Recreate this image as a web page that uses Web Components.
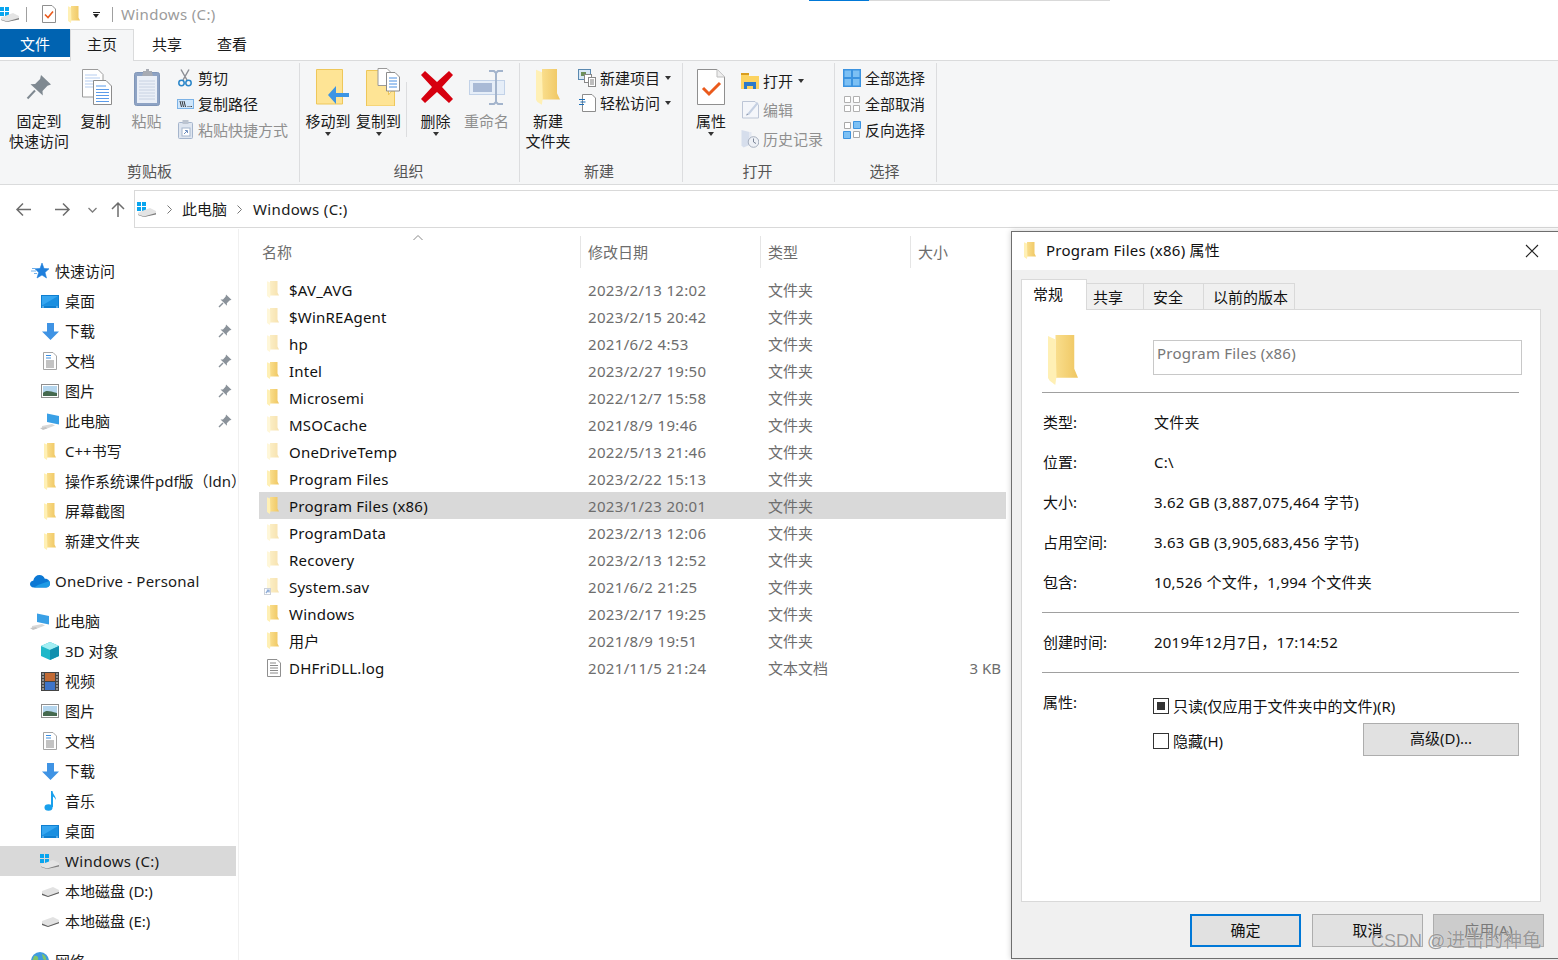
<!DOCTYPE html>
<html lang="zh">
<head>
<meta charset="utf-8">
<title>Windows (C:)</title>
<style>
  html, body { margin: 0; height: 960px; overflow: hidden; background: #fff; }
  body { font: 15px/20px "Noto Sans", "Noto Sans CJK SC", sans-serif; color: #1a1a1a; }
  explorer-window { width: 1558px; height: 960px; }
</style>
</head>
<body>
<explorer-window>
  <title-bar slot="top"></title-bar>
  <ribbon-tabs slot="top"></ribbon-tabs>
  <ribbon-bar slot="top">
    <ribbon-group label="剪贴板" width="300" pad="9">
      <ribbon-big icon="pin" w="60" lines="固定到|快速访问"></ribbon-big>
      <ribbon-big icon="copy" w="53" shift="2" lines="复制"></ribbon-big>
      <ribbon-big icon="clip" w="49" shift="1" lines="粘贴" off></ribbon-big>
      <ribbon-col gap="5">
        <ribbon-small icon="cut">剪切</ribbon-small>
        <ribbon-small icon="path">复制路径</ribbon-small>
        <ribbon-small icon="pasteshort" off>粘贴快捷方式</ribbon-small>
      </ribbon-col>
    </ribbon-group>
    <ribbon-group label="组织" width="220" pad="3" lshift="-1">
      <ribbon-big icon="moveto" w="50" shift="8" lines="移动到" arrow></ribbon-big>
      <ribbon-big icon="copyto" w="51" shift="8" lines="复制到" arrow></ribbon-big>
      <ribbon-sep></ribbon-sep>
      <ribbon-big icon="del" w="57" shift="2" lines="删除" arrow></ribbon-big>
      <ribbon-big icon="rename" w="45" shift="1" lines="重命名" off></ribbon-big>
    </ribbon-group>
    <ribbon-group label="新建" width="163" pad="3" lshift="-2">
      <ribbon-big icon="newfolder" w="50" lines="新建|文件夹"></ribbon-big>
      <ribbon-col gap="4">
        <ribbon-small icon="newitem" arrow>新建项目</ribbon-small>
        <ribbon-small icon="easy" arrow>轻松访问</ribbon-small>
      </ribbon-col>
    </ribbon-group>
    <ribbon-group label="打开" width="152" pad="3" lshift="-1">
      <ribbon-big icon="props" w="50" lines="属性" arrow></ribbon-big>
      <ribbon-col gap="8" top="4">
        <ribbon-small icon="open" arrow>打开</ribbon-small>
        <ribbon-small icon="edit" off>编辑</ribbon-small>
        <ribbon-small icon="history" off>历史记录</ribbon-small>
      </ribbon-col>
    </ribbon-group>
    <ribbon-group label="选择" width="102" pad="3" lshift="-1">
      <ribbon-col gap="5">
        <ribbon-small icon="selall">全部选择</ribbon-small>
        <ribbon-small icon="selnone">全部取消</ribbon-small>
        <ribbon-small icon="selinv">反向选择</ribbon-small>
      </ribbon-col>
    </ribbon-group>
  </ribbon-bar>
  <address-bar slot="top"></address-bar>

  <nav-pane slot="nav">
    <nav-item icon="star" level="0">快速访问</nav-item>
    <nav-item icon="desktop" pin>桌面</nav-item>
    <nav-item icon="down" pin>下载</nav-item>
    <nav-item icon="doc" pin>文档</nav-item>
    <nav-item icon="pic" pin>图片</nav-item>
    <nav-item icon="pc" pin>此电脑</nav-item>
    <nav-item icon="folder">C++书写</nav-item>
    <nav-item icon="folder">操作系统课件pdf版（ldn）</nav-item>
    <nav-item icon="folder">屏幕截图</nav-item>
    <nav-item icon="folder">新建文件夹</nav-item>
    <nav-item icon="onedrive" level="0" space wide>OneDrive - Personal</nav-item>
    <nav-item icon="pc" level="0" space>此电脑</nav-item>
    <nav-item icon="cube">3D 对象</nav-item>
    <nav-item icon="film">视频</nav-item>
    <nav-item icon="pic">图片</nav-item>
    <nav-item icon="doc">文档</nav-item>
    <nav-item icon="down">下载</nav-item>
    <nav-item icon="music">音乐</nav-item>
    <nav-item icon="desktop">桌面</nav-item>
    <nav-item icon="drive" selected wide>Windows (C:)</nav-item>
    <nav-item icon="hdd">本地磁盘 (D:)</nav-item>
    <nav-item icon="hdd">本地磁盘 (E:)</nav-item>
    <nav-item icon="globe" level="0" space>网络</nav-item>
  </nav-pane>

  <file-list slot="main">
    <file-row icon="folder" pale date="2023/2/13 12:02">$AV_AVG</file-row>
    <file-row icon="folder" pale date="2023/2/15 20:42">$WinREAgent</file-row>
    <file-row icon="folder" pale date="2021/6/2 4:53">hp</file-row>
    <file-row icon="folder" date="2023/2/27 19:50">Intel</file-row>
    <file-row icon="folder" date="2022/12/7 15:58">Microsemi</file-row>
    <file-row icon="folder" pale date="2021/8/9 19:46">MSOCache</file-row>
    <file-row icon="folder" pale date="2022/5/13 21:46">OneDriveTemp</file-row>
    <file-row icon="folder" date="2023/2/22 15:13">Program Files</file-row>
    <file-row icon="folder" selected date="2023/1/23 20:01">Program Files (x86)</file-row>
    <file-row icon="folder" pale date="2023/2/13 12:06">ProgramData</file-row>
    <file-row icon="folder" pale date="2023/2/13 12:52">Recovery</file-row>
    <file-row icon="linkfolder" pale date="2021/6/2 21:25">System.sav</file-row>
    <file-row icon="folder" date="2023/2/17 19:25">Windows</file-row>
    <file-row icon="folder" date="2021/8/9 19:51">用户</file-row>
    <file-row icon="log" date="2021/11/5 21:24" type="文本文档" size="3 KB">DHFriDLL.log</file-row>
  </file-list>

  <props-dialog slot="float"></props-dialog>
  <water-mark slot="float">CSDN @<span style="font-size:19px;margin-left:1px">进击的神龟</span></water-mark>
</explorer-window>

<script>
// folder gradient, every svg gets its own copy because ids stay inside one shadow root
const folderSvg = `
  <defs><linearGradient id="fg" x1="0" x2="1"><stop offset="0" stop-color="#fde69b"/><stop offset="1" stop-color="#efc661"/></linearGradient></defs>
  <path d="M0 0H10.500V11.500L12 14.500H3V0Z" fill="url(#fg)"/>
  <path d="M0 .3L3 1.500 3.400 14 2.900 17 .7 15.600 0 14.600Z" fill="#fff0b5"/>`;

const ICONS = {
  folder: [12, 17, folderSvg],
  linkfolder: [16, 17, `<g transform="translate(3)">${folderSvg}</g>
    <rect x=".5" y="10.500" width="6" height="6" fill="#fff" stroke="#9aa5b5"/><path d="M2 15l2-2.500M2.800 12.300H5V14.500" stroke="#1f5bb0" stroke-width="1.400" fill="none"/>`],
  newfolder: [24, 36, `<g transform="scale(2 2.110)">${folderSvg}</g>`],
  bigfolder: [30, 50, `<g transform="scale(2.500 2.940)">${folderSvg}</g>`],
  pin: [26, 26, `<path d="M15 1l10 9.500-3.500 1.200-5 5.300.3 4.500L4.500 10.300l4.600-.3 5-5z" fill="#7f8991"/><path d="M9 16.500L1.500 24.500" stroke="#7f8991" stroke-width="2"/>`],
  smallpin: [14, 14, `<path d="M8 .5l5.500 5.300-2 .6-2.700 2.900.2 2.400L2.500 5.500l2.500-.1 2.700-2.800z" fill="#8a929a"/><path d="M5 9L1 13" stroke="#8a929a" stroke-width="1.500"/>`],
  copy: [30, 36, `<path d="M.5.5H16l5 5V28H.5z" fill="#fff" stroke="#9c9c9c"/><path d="M3 6h12M3 9h15M3 12h15M3 15h15M3 18h15" stroke="#b5cdf0"/>
    <path d="M11.500 11.500H24l5.500 5.500v18.500h-18z" fill="#fff" stroke="#8c8c8c"/><path d="M14 17h10M14 20.500h13M14 23.500h13M14 26.500h13M14 29.500h13M14 32.500h13" stroke="#5b9bea"/>`],
  clip: [26, 37, `<rect x=".5" y="3.500" width="25" height="33" rx="2" fill="#8ea3c4" stroke="#8096b8"/><rect x="3" y="7" width="20" height="27" fill="#eaeff7"/>
    <path d="M5 12h16M5 15h16M5 18h16M5 21h16M5 24h16M5 27h16M5 30h16" stroke="#c8d2e2"/><path d="M9 4V2h3V0h3v2h3v2l1 3H8z" fill="#a7abb3"/>`],
  cut: [14, 18, `<path d="M3 .5L9 11M11 .5L5 11" stroke="#8c8f96" stroke-width="1.500"/><circle cx="3.500" cy="14" r="2.700" fill="none" stroke="#2b86c9" stroke-width="1.500"/><circle cx="10.500" cy="14" r="2.700" fill="none" stroke="#2b86c9" stroke-width="1.500"/>`],
  path: [17, 10, `<rect x=".5" y=".5" width="16" height="9" fill="#cfe6fb" stroke="#7bb2e6"/><path d="M3 2l1.500 6M5 2l1.500 6M7 2l1.500 6" stroke="#222" stroke-width=".9"/><path d="M10.500 7.500h1M12.500 7.500h1M14 7.500h1" stroke="#444"/>`],
  pasteshort: [15, 19, `<rect x=".5" y="2.500" width="14" height="16" rx="1" fill="#dfe6f0" stroke="#a5b5cc"/><rect x="4.500" y="0" width="6" height="4" fill="#bcc4d0"/><rect x="4" y="8" width="8" height="8" fill="#fff" stroke="#a5b5cc"/><path d="M6 14l3-3M7 10.500h2.500V13" stroke="#6f8fbf" fill="none"/>`],
  moveto: [33, 36, `<path d="M.5.5h26v34.500H.5z" fill="#fee495" stroke="#eec75a"/><path d="M33 24h-13V17L12 26l8 9v-7h13z" fill="#3d95e4"/>`],
  copyto: [34, 38, `<path d="M.5 2.500h22V27l3-4h3v15H.5z" fill="#fee495" stroke="#eec75a"/><path d="M13 .5h9l5 5v12H13z" fill="#fff" stroke="#9a9a9a" transform="translate(-1)"/><path d="M20.500 4.500H29l4.500 4.500v14H20.500z" fill="#fff" stroke="#8c8c8c"/><path d="M23 10h8M23 13h8M23 16h8M23 19h8" stroke="#4a90e2"/>`],
  del: [32, 32, `<path d="M4 0L16 11 28 0l4 4-11 12 11 12-4 4-12-11L4 32 0 28l11-12L0 4z" fill="#d6000f"/>`],
  rename: [36, 35, `<rect x=".5" y="10.500" width="35" height="14" fill="#e6eef8" stroke="#c2d2e8"/><rect x="4" y="13" width="19" height="9" fill="#a9bad6"/><path d="M22 1h5l2 2 2-2h5M29 3v29M22 34h5l2-2 2 2h5" stroke="#a3b4cc" stroke-width="2" fill="none" transform="translate(-2)"/>`],
  newitem: [18, 18, `<rect x=".5" y=".5" width="12" height="10" fill="#d8e8f5" stroke="#5a89b0"/><rect x="3" y="3" width="5" height="4" fill="#6c8f5a"/><rect x="6.500" y="5.500" width="7" height="8" fill="#fff" stroke="#888"/><rect x="10.500" y="8.500" width="7" height="9" fill="#fff" stroke="#888"/><path d="M12 11h4M12 13h4M12 15h4" stroke="#7d7d7d"/>`],
  easy: [17, 18, `<path d="M3.500.5H13l3.500 3.500v13.500h-13z" fill="#fff" stroke="#8c8c8c"/><path d="M0 5.500h6M1.500 8h5M0 10.500h5" stroke="#1d6fb8" stroke-width="1.200"/>`],
  props: [28, 36, `<path d="M.5.5H20l7.500 7.500v27.500H.5z" fill="#fff" stroke="#8f8f8f"/><path d="M20 .5V8h7.500" fill="#eee" stroke="#bdbdbd"/><path d="M6 19l6 6L23 14" fill="none" stroke="#ea5a1c" stroke-width="3"/>`],
  props14: [14, 18, `<path d="M.5.5H10l3.500 3.500v13.500H.5z" fill="#fff" stroke="#8f8f8f"/><path d="M3 9.500l3 3 5-6" fill="none" stroke="#ea5a1c" stroke-width="1.600"/>`],
  open: [18, 17, `<path d="M0 1h8v3h10v13H0z" fill="#fcd360"/><path d="M0 1h8v2H0z" fill="#d99d1e"/><path d="M3 10h12v7h-3v-3H6v3H3z" fill="#2b79c9"/>`],
  edit: [17, 19, `<path d="M.5 1.500H13L16.500 5v13H.5z" fill="#f4f6fa" stroke="#bdc6d6"/><path d="M5 14L15 2l1.500 1.500L7 15z" fill="#c5d0e2"/><path d="M4 15.500l1-2 1.500 1.200z" fill="#8b97ab"/>`],
  history: [18, 19, `<path d="M.5 1l8 2v13l-6 2.500-2-2z" fill="#d6deec"/><path d="M8.500 3h2v8h-2z" fill="#e4e9f2"/><circle cx="12.500" cy="13" r="5.300" fill="#eef1f6" stroke="#a5aebd"/><path d="M12.500 9.500V13l2.500 1.500" stroke="#7d8799" fill="none"/>`],
  selall: [18, 18, `<path d="M0 0h18v18H0z" fill="#3b93e0"/><path d="M1.500 1.500h6.500v6.500H1.500zM10 1.500h6.500v6.500H10zM1.500 10h6.500v6.500H1.500zM10 10h6.500v6.500H10z" fill="#7cc0f4"/>`],
  selnone: [18, 18, `<path d="M1.500 1.500h6v6h-6zM10.500 1.500h6v6h-6zM1.500 10.500h6v6h-6zM10.500 10.500h6v6h-6z" fill="#fff" stroke="#b0b0b0"/>`],
  selinv: [18, 18, `<path d="M1.500 1.500h6v6h-6zM10.500 10.500h6v6h-6z" fill="#fff" stroke="#a8a8a8"/><path d="M10.500 .5h7v7h-7zM.5 10.500h7v7h-7z" fill="#7cc0f4" stroke="#3b93e0"/>`],
  star: [18, 16, `<path d="M11 0l2 5.500 5 .3-4 3.600 1.500 5.600L11 12l-5 3 1.700-5.600-3.700-3.600 5-.3z" fill="#1f7fdc" stroke="#1f7fdc" stroke-width=".6"/><path d="M1 5.500h5M0 8h5M3 10.500h3" stroke="#6fb0ec"/>`],
  desktop: [18, 13, `<rect width="18" height="13" fill="#0f7fd0"/><path d="M1 1h16v9.500H1z" fill="#36a6f0"/><path d="M1 10.500L17 1v9.500z" fill="#1a8fe0"/><path d="M1 12h2M15 12h2" stroke="#9dd4fa"/>`],
  down: [17, 17, `<path d="M5 0h7v8.500h5L8.500 17 0 8.500h5z" fill="#3f93e4"/>`],
  doc: [14, 18, `<path d="M.5.5H10l3.500 3.500v13.500H.5z" fill="#fff" stroke="#a5a5a5"/><path d="M3 3.500h5M3 6h5" stroke="#3a8ee0"/><path d="M3 9h8M3 11h8M3 13h8M3 15h8" stroke="#888"/>`],
  pic: [18, 14, `<rect x=".5" y=".5" width="17" height="13" fill="#fff" stroke="#8f8f8f"/><rect x="2" y="2" width="14" height="10" fill="#b5d6ee"/><path d="M2 9c3-3 6-2 14 0v3H2z" fill="#45694f"/>`],
  pc: [20, 17, `<path d="M7 .5l12 2.500v8.500L7 9z" fill="#39a0e6"/><path d="M2 13l10-2 3 1.500-9 3.500H2z" fill="#d8d8d8"/><path d="M0 15l6-1 1 1.500-4 1.500z" fill="#c4c4c4"/>`],
  drive: [20, 15, `<path d="M0 0h4v4H0zM5 0h4v4H5zM0 5h4v4H0zM5 5h4v4H5z" fill="#08a5ef"/><path d="M1 10.500l12-4.500 6 3v2.500L7 15l-6-2z" fill="#e4e4e4"/><path d="M1 12.500L7 14.500l12-3.500v1.500L7 15l-6-2z" fill="#7d7d7d"/>`],
  hdd: [19, 11, `<path d="M1 5l11-4 6 3v3L7 11 1 9z" fill="#e2e2e2"/><path d="M1 7.500L7 10 18 6v1.300L7 11 1 9z" fill="#5f5f5f"/>`],
  onedrive: [20, 14, `<path d="M4 13.500C1 13.500 0 11.500 0 10c0-2 1.500-3.300 3.200-3.300C4 3 6.500 1 9.500 1c2.500 0 4.500 1.500 5.300 3.700 3-.3 5.200 2 5.200 4.800 0 2.500-2 4-4 4z" fill="#0b78d4"/><path d="M4 13.500h12c2 0 4-1.500 4-4 0-1-.3-1.800-.7-2.500L8 11z" fill="#1d9ae5"/>`],
  cube: [18, 18, `<path d="M9 0l9 4v10l-9 4-9-4V4z" fill="#1fb8c9"/><path d="M0 4l9 4 9-4-9-4z" fill="#a2eef3"/><path d="M9 8l9-4v10l-9 4z" fill="#118fae"/>`],
  film: [18, 19, `<rect width="18" height="19" fill="#444"/><rect x="4" y="1" width="10" height="8" fill="#c26a34"/><rect x="4" y="10" width="10" height="8" fill="#3e74c8"/><path d="M1 2h2M1 5h2M1 8h2M1 11h2M1 14h2M1 17h2M15 2h2M15 5h2M15 8h2M15 11h2M15 14h2M15 17h2" stroke="#ddd"/>`],
  music: [12, 20, `<ellipse cx="4.500" cy="16.500" rx="4" ry="3.300" fill="#19a0ec"/><path d="M7 16V0h1.500c.5 4 3.500 5 3.500 9-1-2-2-3-3-3.500V16z" fill="#19a0ec"/>`],
  log: [14, 18, `<path d="M.5.500H10l3.500 3.500v13.500H.5z" fill="#fff" stroke="#8f8f8f"/><path d="M3 4h6M3 6.500h8M3 9h8M3 11.500h8M3 14h8" stroke="#8a8a8a"/>`],
  globe: [18, 18, `<circle cx="9" cy="9" r="9" fill="#3f9be0"/><path d="M3 4c3-1 5 1 4 4s-3 2-4 5l-2-3zM11 2c3 1 5 4 4 7l-3-2z" fill="#7fc46b"/>`],
  close: [14, 14, `<path d="M1 1l12 12M13 1L1 13" stroke="#222" stroke-width="1.100"/>`]
};

class XIcon extends HTMLElement {
  connectedCallback() {
    const [w, h, body] = ICONS[this.getAttribute('name')];
    const root = this.shadowRoot || this.attachShadow({mode: 'open'});
    root.innerHTML = `<style>:host{display:inline-flex;flex:none} svg{display:block}</style>
      <svg width="${w}" height="${h}" viewBox="0 0 ${w} ${h}">${body}</svg>`;
  }
}

class ExplorerWindow extends HTMLElement {
  constructor() {
    super();
    this.attachShadow({mode: 'open'}).innerHTML = `
      <style>
        :host { display: flex; flex-direction: column; position: relative; overflow: hidden; }
        .main { display: flex; flex: 1; min-height: 0; }
      </style>
      <slot name="top"></slot>
      <div class="main"><slot name="nav"></slot><slot name="main"></slot></div>
      <slot name="float"></slot>`;
  }
}

class TitleBar extends HTMLElement {
  constructor() {
    super();
    this.attachShadow({mode: 'open'}).innerHTML = `
      <style>
        :host { display: flex; align-items: center; height: 29px; padding-bottom: 1px; box-sizing: border-box; position: relative; color: #9b9b9b; }
        i { width: 1px; height: 15px; background: #a0a0a0; }
        b { width: 0; height: 0; border: 3.500px solid transparent; border-top: 4px solid #222; border-bottom: 0; position: relative; top: 2px; }
        b::before { content: ""; position: absolute; left: -3.500px; top: -6px; width: 7px; height: 1px; background: #222; }
        span { letter-spacing: .35px; }
        .top { position: absolute; top: 0; left: 809px; width: 301px; height: 1px; background: #d9d9d9; }
        .top::before { content: ""; position: absolute; left: 0; top: 0; width: 60px; height: 1px; background: #0078d7; }
      </style>
      <div class="top"></div>
      <x-icon name="drive" style="margin-right:6px"></x-icon>
      <i style="margin-right:15px"></i>
      <x-icon name="props14"></x-icon>
      <x-icon name="folder" style="margin:0 13px 0 12px"></x-icon>
      <b style="margin-right:13px"></b>
      <i style="margin-right:8px"></i>
      <span>Windows (C:)</span>`;
  }
}

class RibbonTabs extends HTMLElement {
  constructor() {
    super();
    this.attachShadow({mode: 'open'}).innerHTML = `
      <style>
        :host { display: flex; height: 32px; box-sizing: border-box; border-bottom: 1px solid #dadbdc; }
        div { width: 65px; text-align: center; padding-top: 5px; height: 32px; box-sizing: border-box; }
        .file { width: 70px; height: 28px; background: #0063b1; color: #fff; padding-top: 5px; }
        .on { width: 64px; background: #f5f6f7; border: 1px solid #dadbdc; border-bottom: 0; padding-top: 4px; }
      </style>
      <div class="file">文件</div><div class="on">主页</div><div style="width:66px">共享</div><div style="width:64px">查看</div>`;
  }
}

class RibbonBar extends HTMLElement {
  constructor() {
    super();
    this.attachShadow({mode: 'open'}).innerHTML = `
      <style>
        :host { display: flex; height: 123px; background: #f5f6f7; border-bottom: 1px solid #dadbdc; box-sizing: content-box; }
      </style>
      <slot></slot>`;
  }
}

class RibbonGroup extends HTMLElement {
  constructor() {
    super();
    this.attachShadow({mode: 'open'}).innerHTML = `
      <style>
        :host { display: flex; flex-direction: column; box-sizing: border-box; height: 119px; margin-top: 2px; border-right: 1px solid #dcdddf; }
        .body { display: flex; align-items: flex-start; height: 98px; padding-top: 3px; box-sizing: border-box; }
        .label { text-align: center; color: #555; height: 20px; }
      </style>
      <div class="body"><slot></slot></div><div class="label"></div>`;
  }
  connectedCallback() {
    this.style.width = this.getAttribute('width') + 'px';
    this.shadowRoot.querySelector('.body').style.paddingLeft = this.getAttribute('pad') + 'px';
    const label = this.shadowRoot.querySelector('.label');
    label.textContent = this.getAttribute('label');
    // the group captions do not sit quite in the middle of their group
    const shift = +this.getAttribute('lshift') || 0;
    if (shift) label.style.paddingRight = (-shift * 2) + 'px';
  }
}

class RibbonBig extends HTMLElement {
  constructor() {
    super();
    this.attachShadow({mode: 'open'}).innerHTML = `
      <style>
        :host { display: flex; flex-direction: column; align-items: center; flex: none; white-space: nowrap; }
        :host([off]) { color: #8f8f8f; }
        .pic { height: 38px; margin-top: 2px; margin-bottom: 5px; display: flex; align-items: center; justify-content: center; }
        b { width: 0; height: 0; margin-top: 1px; border: 3.500px solid transparent; border-top: 4px solid #333; border-bottom: 0; }
      </style>
      <div class="pic"></div><div class="txt"></div>`;
  }
  connectedCallback() {
    const root = this.shadowRoot;
    const pic = root.querySelector('.pic');
    this.style.width = this.getAttribute('w') + 'px';
    pic.innerHTML = `<x-icon name="${this.getAttribute('icon')}"></x-icon>`;
    if (this.hasAttribute('shift')) pic.style.paddingLeft = this.getAttribute('shift') + 'px';
    root.querySelector('.txt').innerHTML = this.getAttribute('lines').split('|').map(s => `<div style="text-align:center">${s}</div>`).join('');
    if (this.hasAttribute('arrow')) root.appendChild(document.createElement('b'));
  }
}

class RibbonCol extends HTMLElement {
  constructor() {
    super();
    this.attachShadow({mode: 'open'}).innerHTML = `
      <style>:host { display: flex; flex-direction: column; padding: 1px 0 0 5px; }</style><slot></slot>`;
  }
  connectedCallback() {
    this.style.gap = this.getAttribute('gap') + 'px';
    if (this.hasAttribute('top')) this.style.paddingTop = this.getAttribute('top') + 'px';
  }
}

class RibbonSmall extends HTMLElement {
  constructor() {
    super();
    this.attachShadow({mode: 'open'}).innerHTML = `
      <style>
        :host { display: flex; align-items: center; height: 21px; white-space: nowrap; }
        :host([off]) { color: #8f8f8f; }
        .pic { width: 18px; display: flex; justify-content: center; margin-right: 4px; }
        b { width: 0; height: 0; margin-left: 5px; border: 3.500px solid transparent; border-top: 4px solid #333; border-bottom: 0; }
      </style>
      <div class="pic"></div><slot></slot>`;
  }
  connectedCallback() {
    this.shadowRoot.querySelector('.pic').innerHTML = `<x-icon name="${this.getAttribute('icon')}"></x-icon>`;
    if (this.hasAttribute('arrow')) this.shadowRoot.appendChild(document.createElement('b'));
  }
}

class RibbonSep extends HTMLElement {
  constructor() {
    super();
    this.attachShadow({mode: 'open'}).innerHTML = `
      <style>:host { display: block; flex: none; width: 1px; height: 55px; margin: 16px 0 0 2px; background: #dcdddf; }</style>`;
  }
}

class AddressBar extends HTMLElement {
  constructor() {
    super();
    this.attachShadow({mode: 'open'}).innerHTML = `
      <style>
        :host { display: flex; align-items: flex-start; height: 44px; padding-top: 5px; box-sizing: border-box; }
        .btns { width: 134px; flex: none; height: 39px; }
        .btns svg { display: block; }
        .box { flex: 1; display: flex; align-items: center; height: 38px; box-sizing: border-box; border: 1px solid #d9d9d9; border-right: 0; padding-left: 2px; }
        .chev { margin: 0 10px; }
        .wide { letter-spacing: .35px; }
      </style>
      <div class="btns">
        <svg width="134" height="39" viewBox="0 0 134 39" fill="none">
          <path d="M31 19.500H17M23 13.500l-6 6 6 6" stroke="#6d6d6d" stroke-width="1.500"/>
          <path d="M55 19.500h14M63 13.500l6 6-6 6" stroke="#6d6d6d" stroke-width="1.500"/>
          <path d="M88.500 18l4 4 4-4" stroke="#7d7d7d" stroke-width="1.300"/>
          <path d="M118 27V13M112 19l6-6 6 6" stroke="#6d6d6d" stroke-width="1.500"/>
        </svg>
      </div>
      <div class="box">
        <x-icon name="drive"></x-icon>
        <svg class="chev" width="5" height="9" viewBox="0 0 5 9" fill="none"><path d="M.5.5l4 4-4 4" stroke="#777"/></svg>
        <span>此电脑</span>
        <svg class="chev" style="margin-right:11px" width="5" height="9" viewBox="0 0 5 9" fill="none"><path d="M.5.5l4 4-4 4" stroke="#777"/></svg>
        <span class="wide">Windows (C:)</span>
      </div>`;
  }
}

class NavPane extends HTMLElement {
  constructor() {
    super();
    this.attachShadow({mode: 'open'}).innerHTML = `
      <style>
        :host { display: block; width: 239px; flex: none; box-sizing: border-box; padding-top: 27px; border-right: 1px solid #f0f0f0; overflow: hidden; }
      </style>
      <slot></slot>`;
  }
}

class NavItem extends HTMLElement {
  constructor() {
    super();
    this.attachShadow({mode: 'open'}).innerHTML = `
      <style>
        :host { display: flex; align-items: center; height: 30px; width: 236px; box-sizing: border-box; padding-left: 40px; white-space: nowrap; overflow: hidden; }
        :host([level="0"]) { padding-left: 30px; }
        :host([space]) { margin-top: 10px; }
        :host([selected]) { background: #d9d9d9; }
        :host([wide]) { letter-spacing: .2px; }
        :host([selected][wide]) { letter-spacing: .33px; }
        .pic { width: 20px; flex: none; margin-right: 5px; display: flex; justify-content: center; }
        .txt { flex: 1; overflow: hidden; }
        .pin { flex: none; margin: 0 4px 0 3px; }
      </style>
      <div class="pic"></div><div class="txt"><slot></slot></div>`;
  }
  connectedCallback() {
    this.shadowRoot.querySelector('.pic').innerHTML = `<x-icon name="${this.getAttribute('icon')}"></x-icon>`;
    if (this.hasAttribute('pin')) {
      const p = document.createElement('x-icon');
      p.className = 'pin';
      p.setAttribute('name', 'smallpin');
      this.shadowRoot.appendChild(p);
    }
  }
}

class FileList extends HTMLElement {
  constructor() {
    super();
    this.attachShadow({mode: 'open'}).innerHTML = `
      <style>
        :host { display: block; flex: 1; padding-left: 20px; color: #000; }
        .head { display: grid; grid-template-columns: 322px 180px 150px 95px; height: 47px; color: #6d6d6d; position: relative; padding-top: 7px; box-sizing: border-box; align-items: start; }
        .head div { border-right: 1px solid #e5e5e5; height: 32px; line-height: 32px; padding-left: 3px; box-sizing: border-box; }
        .head div + div { padding-left: 7px; }
        .head div:last-of-type { border: 0; }
        .head svg { position: absolute; left: 154px; top: 6px; }
      </style>
      <div class="head">
        <div>名称</div><div>修改日期</div><div>类型</div><div>大小</div>
        <svg width="10" height="6" viewBox="0 0 10 6" fill="none"><path d="M.5 5l4.500-4.500L9.500 5" stroke="#888"/></svg>
      </div>
      <slot></slot>`;
  }
}

class FileRow extends HTMLElement {
  constructor() {
    super();
    this.attachShadow({mode: 'open'}).innerHTML = `
      <style>
        :host { display: grid; grid-template-columns: 329px 180px 1fr 88px; align-items: center; height: 27px; width: 747px; white-space: nowrap; }
        :host([selected]) { background: #d9d9d9; }
        .name { display: flex; align-items: center; color: #111; letter-spacing: .22px; }
        .pic { width: 22px; margin-left: 8px; flex: none; display: flex; }
        :host([icon="linkfolder"]) .pic { margin-left: 5px; width: 25px; }
        :host([pale]) x-icon { opacity: .5; }
        .dim { color: #6d6d6d; }
        .date { letter-spacing: .33px; }
        .size { text-align: right; padding-right: 5px; }
      </style>
      <div class="name"><div class="pic"></div><slot></slot></div>
      <div class="dim date"></div><div class="dim type"></div><div class="dim size"></div>`;
  }
  connectedCallback() {
    const root = this.shadowRoot;
    root.querySelector('.pic').innerHTML = `<x-icon name="${this.getAttribute('icon')}"></x-icon>`;
    root.querySelector('.date').textContent = this.getAttribute('date');
    root.querySelector('.type').textContent = this.getAttribute('type') || '文件夹';
    root.querySelector('.size').textContent = this.getAttribute('size') || '';
  }
}

class PropsDialog extends HTMLElement {
  constructor() {
    super();
    this.attachShadow({mode: 'open'}).innerHTML = `
      <style>
        :host { position: absolute; left: 1011px; top: 231px; width: 560px; height: 728px; box-sizing: border-box; display: flex; flex-direction: column; background: #f0f0f0; border: 1px solid #6e6e6e; box-shadow: 0 0 6px rgba(0,0,0,.2); color: #111; }
        .title { display: flex; align-items: center; height: 38px; flex: none; background: #fff; padding: 0 0 2px 12px; box-sizing: border-box; position: relative; }
        .title span { margin-left: 10px; letter-spacing: .25px; }
        .title x-icon:last-child { position: absolute; left: 513px; top: 12px; }
        .tabs { display: flex; align-items: flex-end; height: 39px; flex: none; padding-left: 9px; position: relative; z-index: 1; }
        .tabs div { height: 26px; box-sizing: border-box; border: 1px solid #d9d9d9; border-left: 0; border-bottom: 0; padding: 3px 0 0 9px; background: #f0f0f0; }
        .tabs .on { height: 31px; background: #fff; border-left: 1px solid #d9d9d9; padding: 4px 0 0 11px; margin-bottom: -1px; }
        .panel { width: 520px; height: 593px; flex: none; margin-left: 9px; box-sizing: border-box; background: #fff; border: 1px solid #d9d9d9; padding: 30px 21px 0 20px; }
        .head { display: flex; height: 35px; }
        .ic { width: 111px; margin-top: -5px; padding-left: 6px; box-sizing: border-box; }
        .name { width: 369px; margin-right: -3px; box-sizing: border-box; border: 1px solid #c8c8c8; color: #777; padding: 2px 3px; height: 35px; letter-spacing: .22px; }
        hr { border: 0; height: 1px; background: #a0a0a0; margin: 17px 0 9px; }
        hr.mid { margin: 10px 0 9px; }
        .row { display: flex; align-items: center; height: 40px; }
        .row label { width: 112px; padding-left: 1px; box-sizing: border-box; flex: none; }
        .row span { letter-spacing: .23px; }
        .attrs { display: flex; margin-top: 23px; }
        .attrs label { width: 111px; padding-left: 1px; box-sizing: border-box; flex: none; margin-top: -4px; }
        .checks { flex: 1; }
        .check { display: flex; align-items: center; height: 20px; white-space: nowrap; }
        .check i { width: 16px; height: 16px; margin-right: 4px; box-sizing: border-box; border: 1px solid #333; display: flex; align-items: center; justify-content: center; flex: none; background: #fff; }
        .check i u { width: 8px; height: 8px; background: #333; display: block; }
        .line2 { display: flex; justify-content: space-between; margin-top: 7px; }
        .line2 .check { margin-top: 8px; }
        button { font: inherit; color: #111; background: #e1e1e1; border: 1px solid #adadad; height: 33px; width: 111px; padding: 0 0 2px; }
        .line2 button { width: 156px; padding-bottom: 3px; }
        .foot { display: flex; gap: 10px; margin: 12px 0 0 178px; }
        .foot .def { border: 2px solid #0078d7; }
        .foot .off { background: #ccc; color: #7a7a7a; }
      </style>
      <div class="title"><x-icon name="folder"></x-icon><span>Program Files (x86) 属性</span><x-icon name="close"></x-icon></div>
      <div class="tabs">
        <div class="on" style="width:66px">常规</div>
        <div style="width:57px;padding-left:6px">共享</div>
        <div style="width:60px">安全</div>
        <div style="width:91px">以前的版本</div>
      </div>
      <div class="panel">
        <div class="head">
          <div class="ic"><x-icon name="bigfolder"></x-icon></div>
          <div class="name">Program Files (x86)</div>
        </div>
        <hr>
        <div class="row"><label>类型:</label><span>文件夹</span></div>
        <div class="row"><label>位置:</label><span>C:\\</span></div>
        <div class="row"><label>大小:</label><span>3.62 GB (3,887,075,464 字节)</span></div>
        <div class="row"><label>占用空间:</label><span>3.63 GB (3,905,683,456 字节)</span></div>
        <div class="row"><label>包含:</label><span>10,526 个文件，1,994 个文件夹</span></div>
        <hr class="mid">
        <div class="row"><label>创建时间:</label><span>2019年12月7日，17:14:52</span></div>
        <hr class="mid">
        <div class="attrs">
          <label>属性:</label>
          <div class="checks">
            <div class="check"><i><u></u></i>只读(仅应用于文件夹中的文件)(R)</div>
            <div class="line2">
              <div class="check"><i></i>隐藏(H)</div>
              <button>高级(D)...</button>
            </div>
          </div>
        </div>
      </div>
      <div class="foot">
        <button class="def">确定</button>
        <button style="margin-left:1px">取消</button>
        <button class="off">应用(A)</button>
      </div>`;
  }
}

class WaterMark extends HTMLElement {
  constructor() {
    super();
    this.attachShadow({mode: 'open'}).innerHTML = `
      <style>
        :host { position: absolute; left: 1371px; top: 928px; font: 18px/26px "Liberation Sans", "Noto Sans CJK SC", sans-serif; color: rgba(115,115,115,.7); text-shadow: 0 0 1px rgba(255,255,255,.8); white-space: nowrap; }
      </style>
      <slot></slot>`;
  }
}

customElements.define('x-icon', XIcon);
customElements.define('explorer-window', ExplorerWindow);
customElements.define('title-bar', TitleBar);
customElements.define('ribbon-tabs', RibbonTabs);
customElements.define('ribbon-bar', RibbonBar);
customElements.define('ribbon-group', RibbonGroup);
customElements.define('ribbon-big', RibbonBig);
customElements.define('ribbon-col', RibbonCol);
customElements.define('ribbon-small', RibbonSmall);
customElements.define('ribbon-sep', RibbonSep);
customElements.define('address-bar', AddressBar);
customElements.define('nav-pane', NavPane);
customElements.define('nav-item', NavItem);
customElements.define('file-list', FileList);
customElements.define('file-row', FileRow);
customElements.define('props-dialog', PropsDialog);
customElements.define('water-mark', WaterMark);
</script>
</body>
</html>
